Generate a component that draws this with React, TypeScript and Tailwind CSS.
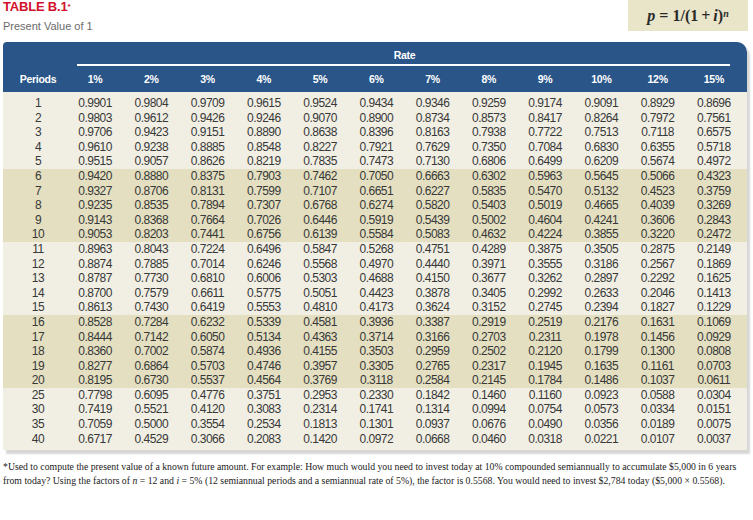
const RATES = ["1%", "2%", "3%", "4%", "5%", "6%", "7%", "8%", "9%", "10%", "12%", "15%"];

const ROWS: [string, string][] = [
  ["1", "0.9901 0.9804 0.9709 0.9615 0.9524 0.9434 0.9346 0.9259 0.9174 0.9091 0.8929 0.8696"],
  ["2", "0.9803 0.9612 0.9426 0.9246 0.9070 0.8900 0.8734 0.8573 0.8417 0.8264 0.7972 0.7561"],
  ["3", "0.9706 0.9423 0.9151 0.8890 0.8638 0.8396 0.8163 0.7938 0.7722 0.7513 0.7118 0.6575"],
  ["4", "0.9610 0.9238 0.8885 0.8548 0.8227 0.7921 0.7629 0.7350 0.7084 0.6830 0.6355 0.5718"],
  ["5", "0.9515 0.9057 0.8626 0.8219 0.7835 0.7473 0.7130 0.6806 0.6499 0.6209 0.5674 0.4972"],
  ["6", "0.9420 0.8880 0.8375 0.7903 0.7462 0.7050 0.6663 0.6302 0.5963 0.5645 0.5066 0.4323"],
  ["7", "0.9327 0.8706 0.8131 0.7599 0.7107 0.6651 0.6227 0.5835 0.5470 0.5132 0.4523 0.3759"],
  ["8", "0.9235 0.8535 0.7894 0.7307 0.6768 0.6274 0.5820 0.5403 0.5019 0.4665 0.4039 0.3269"],
  ["9", "0.9143 0.8368 0.7664 0.7026 0.6446 0.5919 0.5439 0.5002 0.4604 0.4241 0.3606 0.2843"],
  ["10", "0.9053 0.8203 0.7441 0.6756 0.6139 0.5584 0.5083 0.4632 0.4224 0.3855 0.3220 0.2472"],
  ["11", "0.8963 0.8043 0.7224 0.6496 0.5847 0.5268 0.4751 0.4289 0.3875 0.3505 0.2875 0.2149"],
  ["12", "0.8874 0.7885 0.7014 0.6246 0.5568 0.4970 0.4440 0.3971 0.3555 0.3186 0.2567 0.1869"],
  ["13", "0.8787 0.7730 0.6810 0.6006 0.5303 0.4688 0.4150 0.3677 0.3262 0.2897 0.2292 0.1625"],
  ["14", "0.8700 0.7579 0.6611 0.5775 0.5051 0.4423 0.3878 0.3405 0.2992 0.2633 0.2046 0.1413"],
  ["15", "0.8613 0.7430 0.6419 0.5553 0.4810 0.4173 0.3624 0.3152 0.2745 0.2394 0.1827 0.1229"],
  ["16", "0.8528 0.7284 0.6232 0.5339 0.4581 0.3936 0.3387 0.2919 0.2519 0.2176 0.1631 0.1069"],
  ["17", "0.8444 0.7142 0.6050 0.5134 0.4363 0.3714 0.3166 0.2703 0.2311 0.1978 0.1456 0.0929"],
  ["18", "0.8360 0.7002 0.5874 0.4936 0.4155 0.3503 0.2959 0.2502 0.2120 0.1799 0.1300 0.0808"],
  ["19", "0.8277 0.6864 0.5703 0.4746 0.3957 0.3305 0.2765 0.2317 0.1945 0.1635 0.1161 0.0703"],
  ["20", "0.8195 0.6730 0.5537 0.4564 0.3769 0.3118 0.2584 0.2145 0.1784 0.1486 0.1037 0.0611"],
  ["25", "0.7798 0.6095 0.4776 0.3751 0.2953 0.2330 0.1842 0.1460 0.1160 0.0923 0.0588 0.0304"],
  ["30", "0.7419 0.5521 0.4120 0.3083 0.2314 0.1741 0.1314 0.0994 0.0754 0.0573 0.0334 0.0151"],
  ["35", "0.7059 0.5000 0.3554 0.2534 0.1813 0.1301 0.0937 0.0676 0.0490 0.0356 0.0189 0.0075"],
  ["40", "0.6717 0.4529 0.3066 0.2083 0.1420 0.0972 0.0668 0.0460 0.0318 0.0221 0.0107 0.0037"],
];

// bands of 5 rows, alternating light / olive
const BANDS = [
  { rows: ROWS.slice(0, 5), bg: "bg-[#f1efe4]", extra: "pt-[4px]" },
  { rows: ROWS.slice(5, 10), bg: "bg-[#e3dfc0]", extra: "" },
  { rows: ROWS.slice(10, 15), bg: "bg-[#f1efe4]", extra: "" },
  { rows: ROWS.slice(15, 20), bg: "bg-[#e3dfc0]", extra: "" },
  { rows: ROWS.slice(20), bg: "bg-[#f1efe4]", extra: "pb-[4px]" },
];

function Row({ period, values }: { period: string; values: string }) {
  return (
    <div className="grid grid-cols-[64px_repeat(12,minmax(0,1fr))] pr-[5px] h-[14.6px] leading-[14.6px] text-[12px] tracking-[-0.5px] text-[#383838]">
      <div className="text-center pl-[6px]">{period}</div>
      {values.split(" ").map((v, i) => (
        <div key={i} className="text-center">
          {v}
        </div>
      ))}
    </div>
  );
}

export default function App() {
  return (
    <div className="w-[753px] h-[520px] bg-white overflow-hidden font-['Liberation_Sans',Arial,sans-serif]">
      <div className="flex items-start justify-between h-[42px]">
        <div className="pl-[3px]">
          <div className="text-[13px] font-bold leading-[14px] text-[#d2102b] tracking-[-0.2px]">
            TABLE B.1<span className="text-[8px] align-top">*</span>
          </div>
          <div className="text-[11px] leading-[13px] mt-[6px] text-[#6b6b6b]">Present Value of 1</div>
        </div>
        <div className="w-[120px] h-[31px] mr-[5px] bg-[#e8e5c9] flex items-center justify-center font-['Liberation_Serif',serif] font-bold text-[16px] text-[#2a2a2a]">
          <span className="italic">p</span>
          <span className="px-[4px]">=</span>
          <span>1/(1</span>
          <span className="px-[3px]">+</span>
          <span className="italic">i</span>
          <span>)</span>
          <span className="italic text-[10px] self-start mt-[6px]">n</span>
        </div>
      </div>

      <div className="ml-[3px] w-[744px] rounded-tl-[4px] rounded-tr-[10px] shadow-[3px_4px_2px_rgba(0,0,0,0.16)]">
        <div className="bg-[#295589] rounded-tl-[4px] rounded-tr-[10px] h-[50px] pt-[7px] text-white font-bold">
          <div className="grid grid-cols-[64px_1fr] pr-[5px] text-[10.5px] leading-[12px] tracking-[-0.3px]">
            <div />
            <div className="text-center">Rate</div>
          </div>
          <div className="ml-[74px] mr-[17px] mt-[3px] h-[2px] bg-white" />
          <div className="grid grid-cols-[64px_repeat(12,minmax(0,1fr))] pr-[5px] mt-[7px] text-[10.5px] leading-[12px] tracking-[-0.3px]">
            <div className="text-center pl-[6px]">Periods</div>
            {RATES.map((r) => (
              <div key={r} className="text-center">
                {r}
              </div>
            ))}
          </div>
        </div>
        {BANDS.map((band, i) => (
          <div key={i} className={`${band.bg} ${band.extra}`}>
            {band.rows.map(([p, v]) => (
              <Row key={p} period={p} values={v} />
            ))}
          </div>
        ))}
      </div>

      <p className="mt-[10px] pl-[3px] font-['Liberation_Serif',serif] text-[9.75px] leading-[14px] text-[#222] whitespace-nowrap">
        *Used to compute the present value of a known future amount. For example: How much would you need to invest today at 10% compounded semiannually to accumulate $5,000 in 6 years
        <br />
        from today? Using the factors of <span className="italic">n</span> = 12 and <span className="italic">i</span> = 5% (12 semiannual periods and a semiannual rate of 5%), the factor is 0.5568. You would need to invest $2,784 today ($5,000 × 0.5568).
      </p>
    </div>
  );
}
